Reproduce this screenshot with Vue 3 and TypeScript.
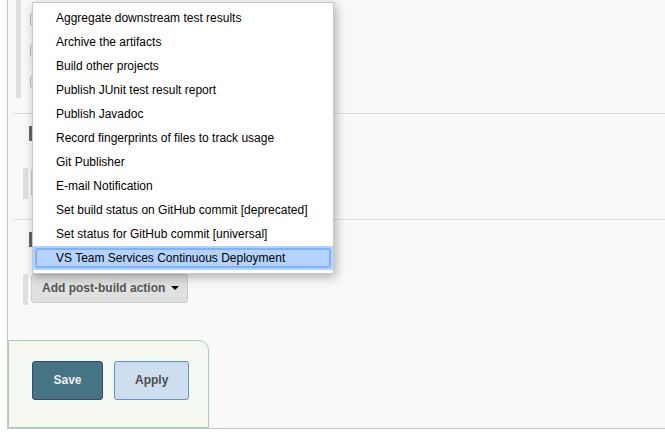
<script setup lang="ts">
import { ref } from 'vue'

const actions: string[] = [
  'Aggregate downstream test results',
  'Archive the artifacts',
  'Build other projects',
  'Publish JUnit test result report',
  'Publish Javadoc',
  'Record fingerprints of files to track usage',
  'Git Publisher',
  'E-mail Notification',
  'Set build status on GitHub commit [deprecated]',
  'Set status for GitHub commit [universal]',
  'VS Team Services Continuous Deployment',
]

const selected = ref(actions.length - 1)
const open = ref(true)
const options = ref<boolean[]>([false, false, false])
</script>

<template>
  <main class="panel">
    <section class="triggers">
      <input
        v-for="(_, i) in options"
        :key="i"
        v-model="options[i]"
        type="checkbox"
        :aria-label="`Trigger ${i + 1}`"
      />
    </section>

    <section class="section">
      <div class="marker"></div>
      <div class="slot">
        <button type="button" class="add" aria-label="Add build step"><span class="caret"></span></button>
      </div>
    </section>

    <section class="section">
      <div class="marker"></div>
      <div class="slot">
        <button type="button" class="add" :aria-expanded="open" @click="open = !open">
          Add post-build action<span class="caret"></span>
        </button>
        <ul v-if="open" class="menu">
          <li v-for="(action, i) in actions" :key="action">
            <button
              type="button"
              class="item"
              :class="{ selected: i === selected }"
              @mouseenter="selected = i"
            >
              {{ action }}
            </button>
          </li>
        </ul>
      </div>
    </section>

    <footer class="actions">
      <button type="button" class="save">Save</button>
      <button type="button" class="apply">Apply</button>
    </footer>
  </main>
</template>

<style>
body {
  background: #fff;
}
</style>

<style scoped>
.panel,
.panel * {
  box-sizing: border-box;
}
.panel {
  margin-left: 7px;
  border-left: 1px solid #c6c6c6;
  border-bottom: 1px solid #c6c6c6;
  background: #f9f9f9;
  font-family: "Liberation Sans", Arial, sans-serif;
  font-size: 12px;
}
button {
  font-family: inherit;
  font-size: inherit;
  cursor: pointer;
}
.triggers {
  display: flex;
  flex-direction: column;
  gap: 18px;
  margin-left: 8px;
  padding: 13px 0 10px 9px;
  border-left: 5px solid #e0e0e0;
}
.triggers input {
  appearance: none;
  width: 13px;
  height: 13px;
  margin: 0;
  border: 1px solid #bbb;
  border-radius: 3px;
  background: #f4f4f4;
}
.section {
  margin: 15px 0 0 5px;
  border-top: 1px solid #dcdcdc;
  padding-top: 12px;
}
.section + .section {
  margin-top: 20px;
}
.marker {
  width: 3px;
  height: 15px;
  margin-left: 16px;
  background: #666;
}
.slot {
  position: relative;
  display: flex;
  height: 31px;
  margin: 27px 0 0 10px;
  padding-left: 3px;
  border-left: 5px solid #e0e0e0;
}
.add {
  display: flex;
  align-items: center;
  gap: 6px;
  height: 29px;
  padding: 0 8px 2px 10px;
  border: 1px solid #ccc;
  border-radius: 3px;
  background: #e0e0e0;
  color: #555;
  font-weight: bold;
}
.caret {
  border: 4px solid transparent;
  border-top-color: #000;
  border-bottom: 0;
}
.menu {
  position: absolute;
  bottom: 31px;
  left: 4px;
  z-index: 2;
  width: 302px;
  margin: 0;
  padding: 3px 0;
  border: 1px solid #c8c8c8;
  background: #fff;
  box-shadow: 2px 3px 10px rgba(0, 0, 0, 0.3);
  list-style: none;
}
.item {
  display: block;
  width: 100%;
  height: 24px;
  padding: 0 23px;
  border: 0;
  background: transparent;
  color: #000;
  line-height: 24px;
  text-align: left;
  white-space: nowrap;
}
.item.selected {
  position: relative;
  background: #b3d4ff;
}
.item.selected::after {
  content: "";
  position: absolute;
  inset: 2px;
  border: 2px solid #80b0ff;
  border-radius: 3px;
}
.actions {
  display: flex;
  gap: 11px;
  width: fit-content;
  margin-top: 35px;
  padding: 20px 19px 27px 23px;
  border: 1px solid #a8cdb8;
  border-top-right-radius: 10px;
  background: #f4f8f0;
}
.save,
.apply {
  min-width: 71px;
  height: 39px;
  padding: 0 20px 2px;
  border: 1px solid #2c5263;
  border-radius: 3px;
  background: #457585;
  color: #eee;
  font-weight: bold;
}
.apply {
  border-color: #5c94ce;
  background: #cddeee;
  color: #4d4d4d;
}
</style>
